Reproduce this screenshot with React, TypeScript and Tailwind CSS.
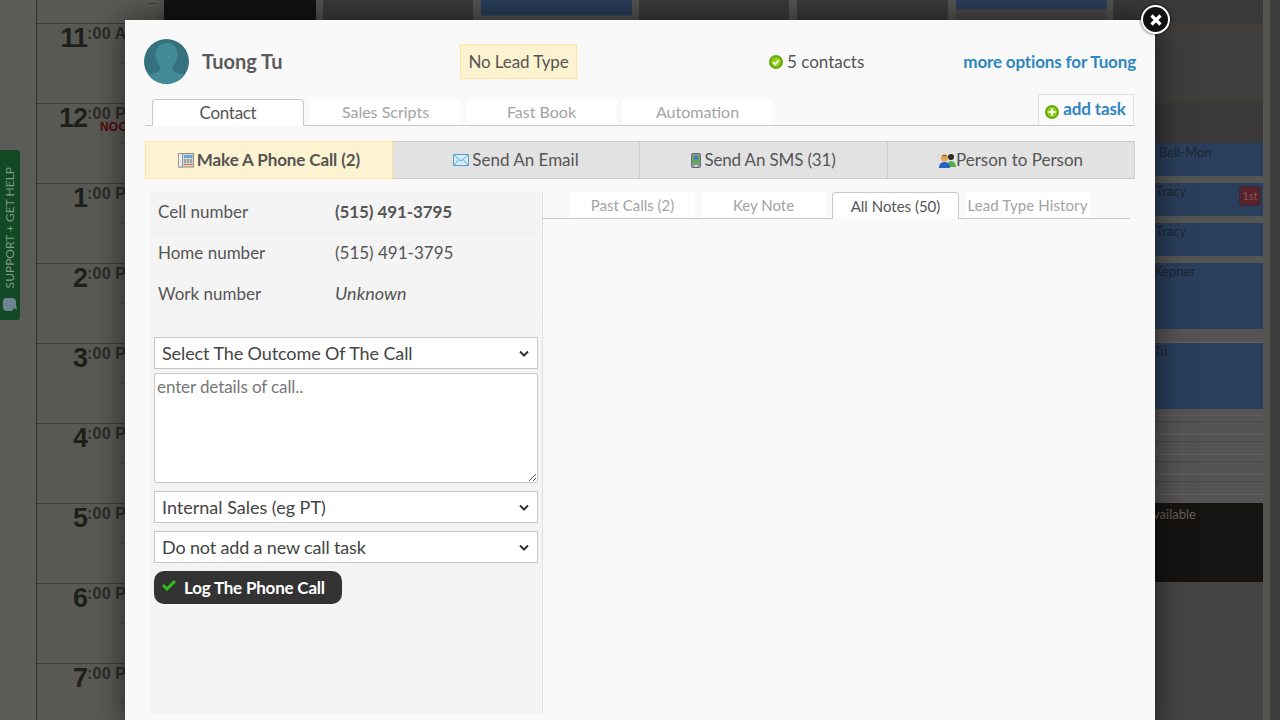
import React from 'react';

const HOURS = [
  { n: '11', s: ':00 AM' },
  { n: '12', s: ':00 PM', noon: true },
  { n: '1', s: ':00 PM' },
  { n: '2', s: ':00 PM' },
  { n: '3', s: ':00 PM' },
  { n: '4', s: ':00 PM' },
  { n: '5', s: ':00 PM' },
  { n: '6', s: ':00 PM' },
  { n: '7', s: ':00 PM' },
];

const PhoneIcon = () => (
  <svg width="16" height="16" viewBox="0 0 16 16" className="shrink-0">
    <rect x="0.5" y="1.5" width="15" height="13.5" fill="#d4d4d4" stroke="#8d8d8d" />
    <rect x="0.5" y="1.5" width="4" height="13.5" fill="#ececec" stroke="#9a9a9a" />
    <rect x="6" y="3" width="8.5" height="3" fill="#6aa6d8" />
    <path d="M6 7.5h2v1H6zM9 7.5h2v1H9zM12 7.5h2v1h-2zM6 9.5h2v1H6zM9 9.5h2v1H9zM12 9.5h2v1h-2z" fill="#666" />
    <path d="M6 12h8.5v1H6z" fill="#d9772b" />
  </svg>
);

const MailIcon = () => (
  <svg width="16" height="12" viewBox="0 0 16 12" className="shrink-0">
    <rect x="0.5" y="0.5" width="15" height="11" fill="#d5ecfb" stroke="#5b9fd0" />
    <path d="M1 1l7 6 7-6M1 11l5-5.5M15 11l-5-5.5" fill="none" stroke="#6aa8d6" />
  </svg>
);

const SmsIcon = () => (
  <svg width="10" height="15" viewBox="0 0 10 15" className="shrink-0">
    <rect x="0.5" y="0.5" width="9" height="14" rx="1" fill="#8d9296" stroke="#6a6e72" />
    <rect x="2" y="2.5" width="6" height="8" fill="#56b04a" />
    <path d="M3 3h4v4l-2-1-2 1z" fill="#3f7fc0" />
    <rect x="3" y="12" width="4" height="1.5" fill="#d8d8d8" />
  </svg>
);

const PeopleIcon = () => (
  <svg width="17" height="15" viewBox="0 0 17 15" className="shrink-0">
    <circle cx="12" cy="4" r="3" fill="#2e2a22" />
    <path d="M8 14c0-4 2-6 4-6s5 2 5 6z" fill="#4cae4c" />
    <circle cx="5.5" cy="5" r="3.5" fill="#e2a553" />
    <path d="M2.5 3.5C3 1 8 1 8.5 3.5 7 3 4 3 2.5 3.5z" fill="#a5651f" />
    <path d="M0 15c0-4 2-6 5.5-6S11 11 11 15z" fill="#2a62c0" />
  </svg>
);

const MainTab = ({ label, active }: { label: string; active?: boolean }) =>
  active ? (
    <div className="w-[152px] h-[27px] -mb-px flex items-center justify-center bg-white border border-b-0 border-[#c8c8c8] rounded-t-[4px] text-[#555] text-[17px] tracking-[-0.3px] mr-[6px]">
      {label}
    </div>
  ) : (
    <div className="w-[151px] h-[26px] flex items-center justify-center bg-white text-[#a3a3a3] text-[16px] mr-[5px]">
      {label}
    </div>
  );

const SubTab = ({ label, w, active, extra = '' }: { label: string; w: string; active?: boolean; extra?: string }) =>
  active ? (
    <div className={`${w} h-[27px] -mb-px flex items-center justify-center bg-white border border-b-0 border-[#c8c8c8] rounded-t-[4px] text-[#555] text-[15px]`}>
      {label}
    </div>
  ) : (
    <div className={`${w} ${extra} h-[26px] flex items-center justify-center bg-white text-[#a3a3a3] text-[15px] whitespace-nowrap`}>
      {label}
    </div>
  );

const Contact = ({ label, value, kind }: { label: string; value: string; kind?: 'bold' | 'italic' }) => (
  <div className="h-[41px] flex items-center border-b border-[#efefef] pl-2 text-[17px] text-[#555]">
    <div className="w-[177px]">{label}</div>
    <div className={kind === 'bold' ? 'font-bold tracking-[-0.1px]' : kind === 'italic' ? 'italic text-[18px] -mt-[2px]' : ''}>{value}</div>
  </div>
);

const Select = ({ label, className = '' }: { label: string; className?: string }) => (
  <div className={`relative w-[384px] h-[32px] ${className}`}>
    <select
      className="w-full h-full block appearance-none bg-white border border-[#c8c8c8] pl-[7px] text-[18px] text-[#444] outline-none"
      defaultValue="a"
    >
      <option value="a">{label}</option>
    </select>
    <svg width="10" height="7" viewBox="0 0 10 7" className="absolute right-[9px] top-[13px] pointer-events-none">
      <path d="M1 1.5l4 4 4-4" fill="none" stroke="#333" strokeWidth="2" />
    </svg>
  </div>
);

export default function App() {
  return (
    <div className="relative w-[1280px] h-[720px] overflow-hidden flex bg-[#5a5a58] font-['Lato',sans-serif]">
      {/* calendar behind the overlay */}
      <div className="w-[37px] shrink-0 border-r border-[#2f2f2d] bg-[#5b5b58]" />
      <div className="w-[120px] shrink-0 bg-[#5a5a55] font-['Liberation_Sans',sans-serif]">
        <div className="h-[24px] border-b border-[#3b3b39]">
          <div className="h-[4px] w-[8px] ml-auto border-b border-[#3b3b39]" />
        </div>
        {HOURS.map((h) => (
          <div key={h.n} className="h-[80px] border-b border-[#3f3f3c] flex relative">
            <div className="w-[50px] shrink-0 text-right text-[27px] tracking-[-1px] font-bold leading-[28px] text-[#1f1f1d]">{h.n}</div>
            <div className="text-[16px] font-bold leading-[18px] text-[#2b2b29] whitespace-nowrap pt-[1px] tracking-[0.2px]">
              {h.s}
              {h.noon && <div className="text-[#520a0a] text-[12px] leading-[12px] -mt-[2px] ml-[13px]">NOON</div>}
            </div>
            <div className="absolute right-0 top-[39px] w-[36px] border-b border-[#4a4a47]" />
          </div>
        ))}
      </div>
      <div className="w-[7px] shrink-0 bg-[#555553]" />
      <div className="w-[152px] shrink-0 bg-[#141310]" />
      <div className="w-[7px] shrink-0 bg-[#555553]" />
      <div className="w-[150px] shrink-0 bg-[#3c3a3a]" />
      <div className="w-[8px] shrink-0 bg-[#555553]" />
      <div className="w-[151px] shrink-0 bg-[#555553]">
        <div className="h-[16px] bg-[#2a3f5c] border-b border-[#3c4a5c]" />
      </div>
      <div className="w-[7px] shrink-0 bg-[#555553]" />
      <div className="w-[150px] shrink-0 bg-[#3c3a3a]" />
      <div className="w-[8px] shrink-0 bg-[#555553]" />
      <div className="w-[151px] shrink-0 bg-[#3c3a3a]" />
      <div className="w-[8px] shrink-0 bg-[#555553]" />
      <div className="w-[151px] shrink-0 bg-[#4c4b4b]">
        <div className="h-[9px] bg-[#2a3f5c]" />
      </div>
      <div className="w-[6px] shrink-0 bg-[#555553]" />
      {/* last day column */}
      <div className="w-[150px] shrink-0 bg-[#3c3a3a] flex flex-col text-[13px] leading-[16px] text-[#1d2633]">
        <div className="h-[23px] bg-[#3b3a3a]" />
        <div className="h-[80px] bg-[#403e3c]" />
        <div className="h-[40px] bg-[#3a3838]" />
        <div className="h-[33px] bg-[#2a3f5c] pl-[46px] pt-[1px]">Bell-Mon</div>
        <div className="h-[7px] bg-[#555553]" />
        <div className="h-[33px] bg-[#2a3f5c] pl-[43px] pr-[2px] flex justify-between">
          <span>Tracy</span>
          <span className="self-start mt-[3px] w-[22px] h-[20px] bg-[#57222a] border border-[#3a2a30] rounded-[4px] text-[#85585c] text-[11px] text-center leading-[18px]">1st</span>
        </div>
        <div className="h-[7px] bg-[#555553]" />
        <div className="h-[33px] bg-[#2a3f5c] pl-[43px]">Tracy</div>
        <div className="h-[7px] bg-[#555553]" />
        <div className="h-[66px] bg-[#2a3f5c] pl-[41px]">Kepner</div>
        <div className="h-[14px] bg-[#555353] border-b border-dotted border-[#6b6969]" />
        <div className="h-[66px] bg-[#2a3f5c] pl-[41px]">Tu</div>
        <div className="h-[94px] bg-[#555353] flex flex-col">
          <div className="h-[7px] shrink-0 border-b border-dotted border-[#6b6969]" />
          <div className="h-[6px] shrink-0 border-b border-[#484848]" />
          <div className="h-[13px] shrink-0 border-b border-dotted border-[#6b6969]" />
          <div className="h-[7px] shrink-0 border-b border-[#484848]" />
          <div className="h-[13px] shrink-0 border-b border-dotted border-[#6b6969]" />
          <div className="h-[7px] shrink-0 border-b border-[#484848]" />
          <div className="h-[13px] shrink-0 border-b border-dotted border-[#6b6969]" />
          <div className="h-[7px] shrink-0 border-b border-[#484848]" />
          <div className="h-[13px] shrink-0 border-b border-dotted border-[#6b6969]" />
        </div>
        <div className="h-[79px] bg-[#151412] pl-[40px] pt-[3px] text-[#6a5f55]">vailable</div>
        <div className="flex-1 bg-[#464545]" />
      </div>
      <div className="w-[7px] shrink-0 bg-[#555553]" />
      <div className="flex-1 bg-[#3e3d3d]" />

      {/* support tab */}
      <div className="absolute left-0 top-[150px] w-[20px] h-[170px] bg-[#134a25] rounded-r-[3px] flex flex-col-reverse items-center justify-start pb-[8px] gap-[10px]">
        <svg width="14" height="14" viewBox="0 0 14 14">
          <path d="M3 0h6a4 4 0 0 1 4 4v3l1 5-3-2a4 4 0 0 1-3 3H4a4 4 0 0 1-4-4V3a3 3 0 0 1 3-3z" fill="#6f8492" />
        </svg>
        <span className="[writing-mode:vertical-rl] rotate-180 text-[12px] leading-[14px] text-[#7f9a85] whitespace-nowrap">SUPPORT + GET HELP</span>
      </div>

      {/* modal */}
      <div className="absolute left-[125px] top-[20px] w-[1030px] h-[710px] bg-[#f9f9f9] shadow-[0_0_30px_rgba(0,0,0,0.6)] pt-[19px] pl-[19px] pr-[20px] text-[#555]">
        <div className="h-[45px] flex items-center relative">
          <svg width="45" height="45" viewBox="0 0 45 45" className="shrink-0 -mt-px">
            <circle cx="22.5" cy="22.5" r="22.5" fill="#36717f" />
            <path d="M22.5 4c7 0 11 5 11 11 0 6-3 10-4.5 13-1 2-.5 4 2 5l9.5 3a22.5 22.5 0 0 1-36 0l9.5-3c2.5-1 3-3 2-5-1.5-3-4.5-7-4.5-13 0-6 4-11 11-11z" fill="#438a97" />
          </svg>
          <div className="ml-[13px] -mt-[2px] w-[258px] text-[20px] font-bold text-[#5a5a5a]">Tuong Tu</div>
          <div className="w-[117px] h-[35px] flex items-center justify-center bg-[#fdf3d0] border border-[#fbe5a0] text-[17px] tracking-[-0.1px] text-[#555]">No Lead Type</div>
          <div className="ml-[192px] flex items-center gap-[4px] text-[17px] text-[#555]">
            <svg width="14" height="14" viewBox="0 0 14 14" className="mt-px">
              <circle cx="7" cy="7" r="7" fill="#6aa80f" />
              <circle cx="7" cy="7" r="4.8" fill="#8fd014" />
              <path d="M4 7.2l2.2 2.2L10 5" fill="none" stroke="#fff" strokeWidth="1.8" />
            </svg>
            5 contacts
          </div>
          <div className="ml-auto -mr-[1px] font-bold text-[17px] tracking-[-0.15px] text-[#2e86c1]">more options for Tuong</div>
        </div>

        <div className="mt-[10px] ml-px h-[32px] -mr-px pl-[7px] border-b border-[#c8c8c8] flex items-end relative w-[989px]">
          <MainTab label="Contact" active />
          <MainTab label="Sales Scripts" />
          <MainTab label="Fast Book" />
          <MainTab label="Automation" />
          <div className="ml-auto w-[96px] h-[31px] bg-[#fbfbfb] border border-b-0 border-[#e2e2e2] flex items-center justify-center gap-[4px] font-bold text-[17px] tracking-[-0.15px] text-[#2e86c1] self-start">
            <svg width="14" height="14" viewBox="0 0 14 14" className="mt-[4px] -ml-px">
              <circle cx="7" cy="7" r="7" fill="#6aa80f" />
              <circle cx="7" cy="7" r="5" fill="#8fd014" />
              <path d="M7 3.5v7M3.5 7h7" stroke="#fff" strokeWidth="2" />
            </svg>
            <span className="-mt-[2px]">add task</span>
          </div>
        </div>

        <div className="mt-[15px] ml-px w-[990px] h-[38px] flex text-[17px] text-[#555]">
          <div className="w-[248px] flex items-center justify-center gap-[3px] bg-[#fdf3d0] border border-[#fbe5a0] font-bold tracking-[-0.1px]">
            <PhoneIcon />
            Make A Phone Call (2)
          </div>
          <div className="w-[247px] flex items-center justify-center gap-[3px] bg-[#e2e2e2] border border-l-0 border-[#cfcfcf]">
            <MailIcon />
            Send An Email
          </div>
          <div className="w-[248px] flex items-center justify-center gap-[3px] bg-[#e2e2e2] border border-l-0 border-[#cfcfcf] tracking-[-0.15px]">
            <SmsIcon />
            Send An SMS (31)
          </div>
          <div className="w-[247px] flex items-center justify-center bg-[#e2e2e2] border border-l-0 border-[#cfcfcf]">
            <PeopleIcon />
            Person to Person
          </div>
        </div>

        <div className="mt-[13px] ml-[6px] h-[522px] flex">
          <div className="w-[393px] shrink-0 bg-[#f4f4f4] border-r border-[#e0e0e0]">
            <Contact label="Cell number" value="(515) 491-3795" kind="bold" />
            <Contact label="Home number" value="(515) 491-3795" />
            <Contact label="Work number" value="Unknown" kind="italic" />
            <div className="pl-1 pt-[22px]">
              <Select label="Select The Outcome Of The Call" className="tracking-[-0.1px]" />
              <textarea
                className="mt-1 block w-[384px] h-[110px] bg-white border border-[#c8c8c8] rounded-[2px] text-[17px] tracking-[-0.1px] leading-[20px] px-[2px] py-[3px] outline-none placeholder:text-[#777]"
                placeholder="enter details of call.."
              />
              <Select label="Internal Sales (eg PT)" className="mt-2" />
              <Select label="Do not add a new call task" className="mt-2 tracking-[-0.15px]" />
              <button className="mt-2 w-[188px] h-[33px] bg-[#333] rounded-[10px] flex items-center pl-[8px] text-white text-[17px] font-bold tracking-[-0.2px]">
                <svg width="14" height="12" viewBox="0 0 14 12" className="-mt-[6px] mr-[8px]">
                  <path d="M1 6l4 4 8-8" fill="none" stroke="#2fc01c" strokeWidth="3" />
                </svg>
                Log The Phone Call
              </button>
            </div>
          </div>
          <div className="flex-1">
            <div className="w-[587px] h-[27px] pl-[27px] border-b border-[#c8c8c8] flex items-end">
              <SubTab label="Past Calls (2)" w="w-[125px]" extra="mr-[6px]" />
              <SubTab label="Key Note" w="w-[125px]" extra="mr-[6px]" />
              <SubTab label="All Notes (50)" w="w-[127px]" active />
              <SubTab label="Lead Type History" w="w-[125px]" extra="ml-[6px] tracking-[0.1px]" />
            </div>
          </div>
        </div>
      </div>

      {/* close button */}
      <div className="absolute left-[1141px] top-[5px] w-[29px] h-[29px] rounded-full bg-[#111] border-2 border-white shadow-[0_0_3px_rgba(0,0,0,0.8)] flex items-center justify-center">
        <svg width="14" height="14" viewBox="0 0 14 14">
          <path d="M2.5 2.5l9 9M11.5 2.5l-9 9" stroke="#fff" strokeWidth="3.2" />
        </svg>
      </div>
    </div>
  );
}
